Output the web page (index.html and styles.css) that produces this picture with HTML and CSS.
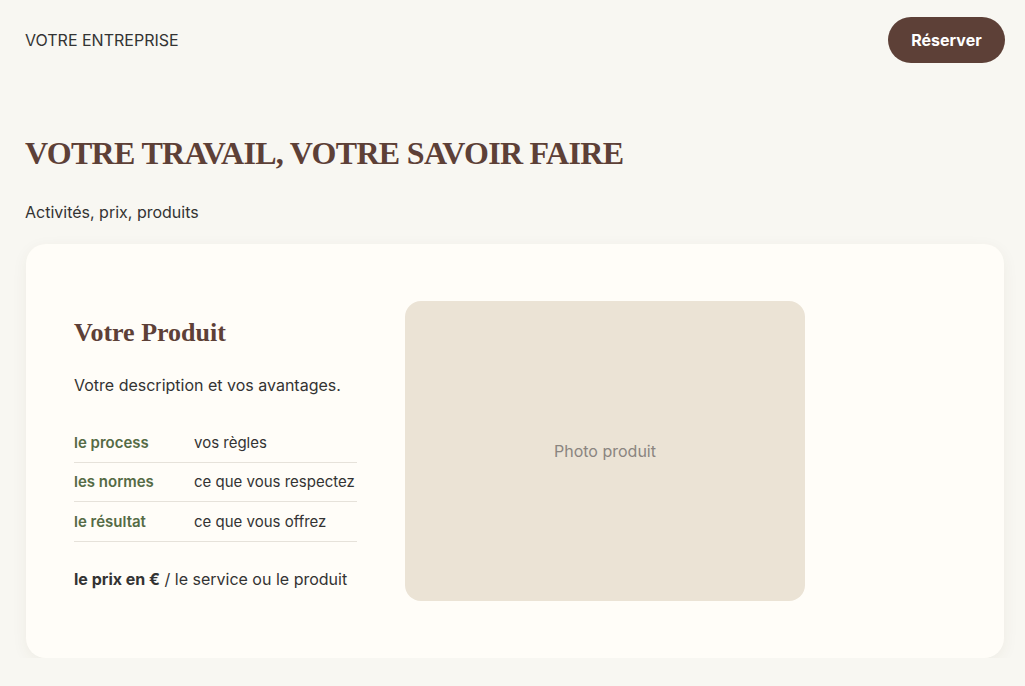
FILE: index.html
```html
<!DOCTYPE html>
<html lang="fr">
<head>
<meta charset="utf-8">
<title>Votre entreprise</title>
<link rel="stylesheet" href="styles.css">
</head>
<body>
<div class="page">
  <header class="topbar">
    <div class="brand">VOTRE ENTREPRISE</div>
    <a class="btn" href="#">Réserver</a>
  </header>
  <section class="hero">
    <h1 class="title">VOTRE TRAVAIL, VOTRE SAVOIR FAIRE</h1>
    <p class="subtitle">Activités, prix, produits</p>
  </section>
  <section class="card">
    <div class="info">
      <h2 class="prod-title">Votre Produit</h2>
      <p class="desc">Votre description et vos avantages.</p>
      <div class="specs">
        <div class="row"><span class="label">le process</span><span class="value">vos règles</span></div>
        <div class="row"><span class="label">les normes</span><span class="value">ce que vous respectez</span></div>
        <div class="row"><span class="label">le résultat</span><span class="value">ce que vous offrez</span></div>
      </div>
      <p class="price"><strong>le prix en €</strong> / le service ou le produit</p>
    </div>
    <div class="photo">Photo produit</div>
  </section>
</div>
</body>
</html>
```

FILE: styles.css
```css
* { box-sizing: border-box; }
html, body { margin: 0; padding: 0; }
body {
  background: #f8f7f2;
  font-family: Inter, "Noto Sans", sans-serif;
  color: #333;
}
.page {
  padding: 17px 20px 0 25px;
}
.topbar {
  display: flex;
  align-items: center;
  justify-content: space-between;
  height: 46px;
}
.brand {
  font-size: 16px;
  color: #333;
}
.btn {
  display: flex;
  align-items: center;
  justify-content: center;
  width: 117px;
  height: 46px;
  border-radius: 23px;
  background: #5d4037;
  color: #fff;
  font-weight: 700;
  font-size: 16px;
  text-decoration: none;
}
.hero {
  padding-top: 67px;
}
.title {
  margin: 0;
  font-family: "Liberation Serif", "DejaVu Serif", serif;
  font-weight: 700;
  font-size: 32px;
  line-height: 46px;
  letter-spacing: -0.7px;
  color: #5d4037;
}
.subtitle {
  margin: 24px 0 0;
  font-size: 16px;
  line-height: 24px;
  color: #333;
}
.card {
  margin: 20px 0 0 1px;
  width: 978px;
  height: 414px;
  background: #fffdf8;
  border-radius: 20px;
  box-shadow: 0 4px 16px rgba(80, 60, 40, 0.06);
  padding: 57px 48px;
  display: flex;
  align-items: flex-start;
  gap: 48px;
}
.info {
  width: 283px;
  margin-top: 16px;
}
.prod-title {
  margin: 0;
  font-family: "Liberation Serif", "DejaVu Serif", serif;
  font-weight: 700;
  font-size: 26px;
  line-height: 32px;
  color: #5d4037;
}
.desc {
  margin: 24px 0 0;
  font-size: 16px;
  line-height: 24px;
  color: #333;
}
.specs {
  margin-top: 26px;
}
.row {
  display: flex;
  align-items: center;
  height: 39.5px;
  border-bottom: 1px solid #e6e2da;
  font-size: 15px;
}
.label {
  width: 120px;
  flex: none;
  font-weight: 600;
  color: #556b45;
}
.value {
  color: #333;
}
.price {
  margin: 25px 0 0;
  font-size: 16px;
  line-height: 24px;
  color: #333;
}
.price strong { font-weight: 700; }
.photo {
  width: 400px;
  height: 300px;
  flex: none;
  border-radius: 16px;
  background: #ebe3d5;
  display: flex;
  align-items: center;
  justify-content: center;
  color: #8a8580;
  font-size: 16px;
}
```
